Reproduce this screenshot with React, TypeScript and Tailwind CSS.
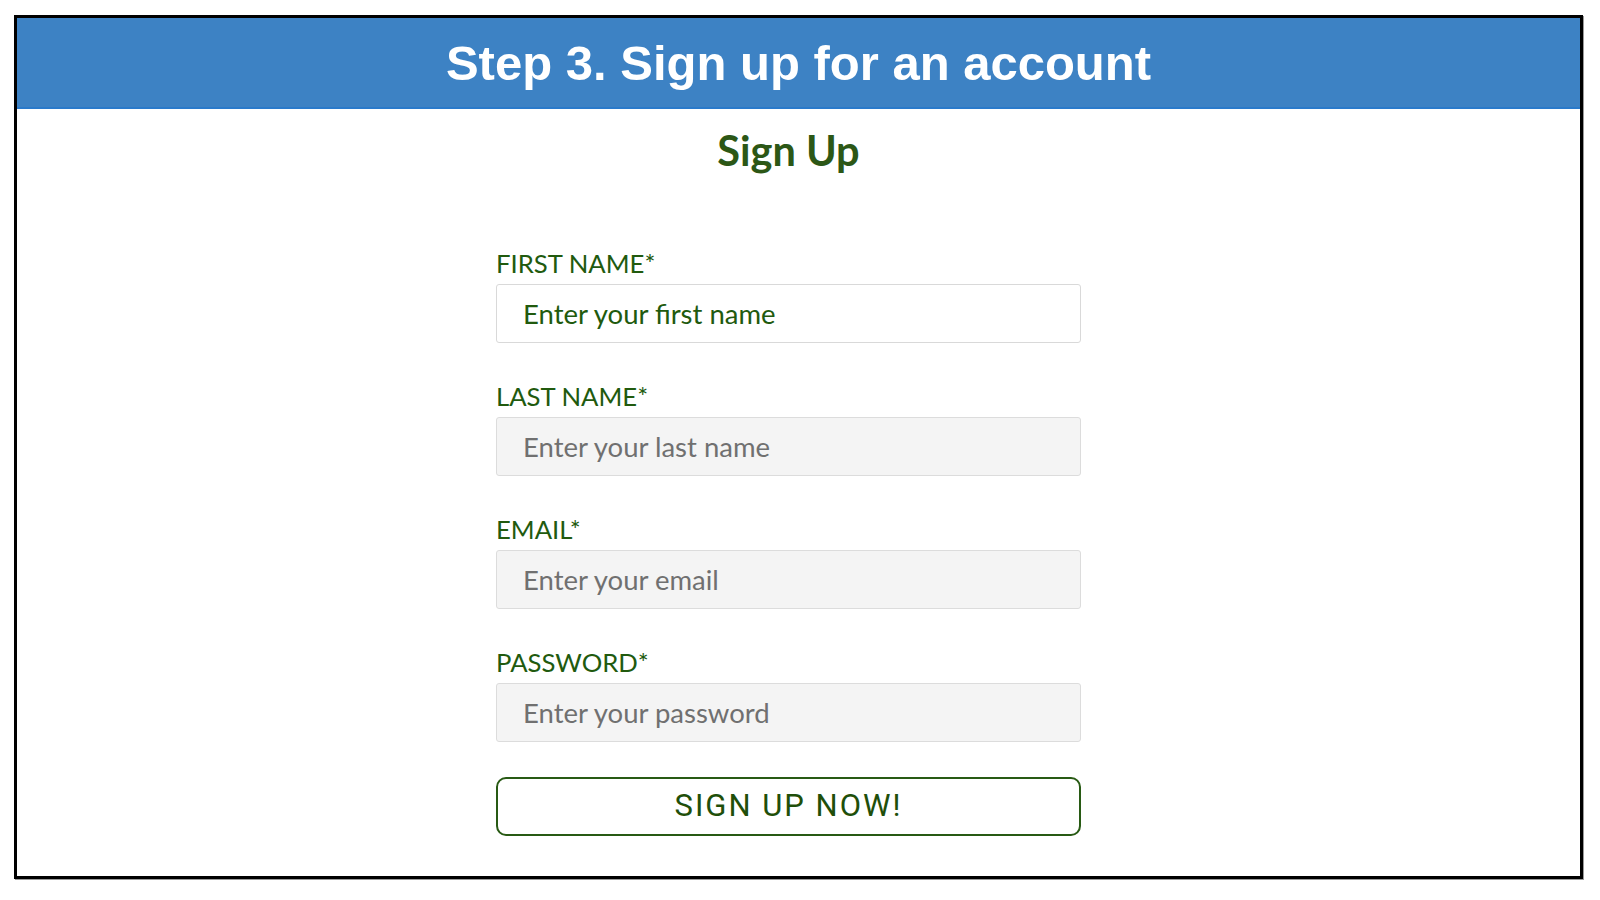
import React from 'react';

// Step 3 sign-up screen, framed like a tutorial slide
const fields = [
  { label: 'FIRST NAME*', placeholder: 'Enter your first name', active: true },
  { label: 'LAST NAME*', placeholder: 'Enter your last name', active: false },
  { label: 'EMAIL*', placeholder: 'Enter your email', active: false },
  { label: 'PASSWORD*', placeholder: 'Enter your password', active: false },
];

export default function App() {
  return (
    <div className="w-[1600px] h-[900px] bg-white pt-[15px] pl-[14px]">
      <div className="w-[1569px] h-[864px] border-[3px] border-black shadow-[1px_1px_0_#9a9a9a] flex flex-col">
        {/* Header bar */}
        <div className="h-[91px] bg-[#3d82c4] border-b-2 border-[#2a7acb] flex items-center justify-center">
          <h1 className="text-white font-bold text-[49px] leading-none font-['Liberation_Sans',Arial,sans-serif] pt-[2px]">
            Step 3. Sign up for an account
          </h1>
        </div>

        {/* Form */}
        <div className="flex-1 flex flex-col items-center pr-[20px] font-['Lato','Liberation_Sans',sans-serif]">
          <h2 className="mt-[17px] text-[41.5px] leading-[48px] font-bold text-[#2c5716]">Sign Up</h2>

          <form className="mt-[74px] w-[585px] flex flex-col gap-[38px]" onSubmit={(e) => e.preventDefault()}>
            {fields.map((f) => (
              <label key={f.label} className="flex flex-col gap-[6px]">
                <span className="text-[25.7px] leading-[30px] text-[#215a0e]">{f.label}</span>
                <input
                  type="text"
                  placeholder={f.placeholder}
                  className={
                    f.active
                      ? 'h-[59px] w-full rounded-[3px] border border-[#d9d9d9] bg-white pl-[26px] text-[27.5px] outline-none placeholder:text-[#215a0e]'
                      : 'h-[59px] w-full rounded-[3px] border border-[#dcdcdc] bg-[#f4f4f4] pl-[26px] text-[27.5px] outline-none placeholder:text-[#707070]'
                  }
                />
              </label>
            ))}
            <button
              type="submit"
              className="-mt-[3px] h-[59px] w-full rounded-[10px] border-2 border-[#285a14] bg-white text-[31px] tracking-[2px] text-[#1f4f0a] font-['Roboto','Liberation_Sans',sans-serif]"
            >
              SIGN UP NOW!
            </button>
          </form>
        </div>
      </div>
    </div>
  );
}
